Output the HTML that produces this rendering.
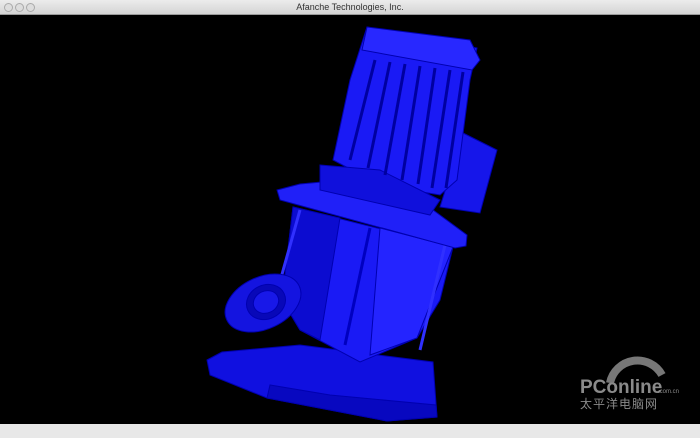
<!DOCTYPE html>
<html><head><style>
html,body{margin:0;padding:0;width:700px;height:438px;overflow:hidden;background:#000;font-family:"Liberation Sans",sans-serif}
.tb{position:absolute;left:0;top:0;width:700px;height:14px;background:linear-gradient(#ececec,#d4d4d4);border-bottom:1px solid #9a9a9a;text-align:center;font-size:9px;line-height:14px;color:#333}
.dot{position:absolute;top:3px;width:7px;height:7px;border-radius:50%;border:1px solid #aaa;background:#ddd}
.bb{position:absolute;left:0;top:424px;width:700px;height:14px;background:#e8e8e8}
</style></head><body>
<div class="tb">Afanche Technologies, Inc.<span class="dot" style="left:4px"></span><span class="dot" style="left:15px"></span><span class="dot" style="left:26px"></span></div>
<svg style="position:absolute;left:0;top:15px" width="700" height="409" viewBox="0 15 700 409">
<g stroke="#0000b0" stroke-width="1">
<polygon points="207,360 222,352 300,345 433,362 437,417 387,421 330,410 267,398 210,375" fill="#1010e0"/>
<polygon points="267,398 330,410 387,421 437,417 436,405 330,395 270,385" fill="#0808c0"/>
<polygon points="293,207 453,247 440,300 417,338 360,362 300,330 282,300" fill="#1a1af5"/>
<polygon points="293,207 340,218 320,340 300,330 282,300" fill="#0c0cd0"/>
<polygon points="380,228 453,247 417,338 370,355" fill="#2424ff"/>
<line x1="300" y1="210" x2="272" y2="310" stroke="#3030ff" stroke-width="3"/>
<line x1="445" y1="245" x2="420" y2="350" stroke="#3030ff" stroke-width="3"/>
<line x1="370" y1="228" x2="345" y2="345" stroke="#0000c0" stroke-width="3"/>
<ellipse cx="263" cy="303" rx="40" ry="26" transform="rotate(-25 263 303)" fill="#1414e0"/>
<ellipse cx="266" cy="302" rx="20" ry="17" transform="rotate(-25 266 302)" fill="#0808b8"/>
<ellipse cx="266" cy="302" rx="13" ry="11" transform="rotate(-25 266 302)" fill="#1818e8"/>
<polygon points="277,190 300,184 387,176 467,235 466,246 455,248 280,200" fill="#2020f8"/>
<polygon points="463,133 497,150 480,213 440,207" fill="#1616ea"/>
<polygon points="367,27 477,48 470,80 457,180 440,195 380,185 333,160 350,80" fill="#1a1af5"/>
<polygon points="367,27 470,40 480,60 472,70 362,50" fill="#2828ff"/>
<polygon points="320,165 380,170 440,200 430,215 320,190" fill="#1010dc"/>
</g>
<g stroke="#0000a0" stroke-width="3">
<line x1="375" y1="60" x2="350" y2="160"/><line x1="390" y1="62" x2="368" y2="168"/>
<line x1="405" y1="64" x2="385" y2="175"/><line x1="420" y1="66" x2="402" y2="180"/>
<line x1="435" y1="68" x2="418" y2="184"/><line x1="450" y1="70" x2="432" y2="188"/>
<line x1="463" y1="72" x2="446" y2="188"/>
</g>
<path d="M610,383 A28,28 0 0 1 662,375" stroke="#777" stroke-width="8" fill="none"/>
<g fill="#8a8a8a" font-family="Liberation Sans,sans-serif">
<text x="580" y="393" font-size="19" font-weight="bold">PConline</text>
<text x="658" y="393" font-size="6">.com.cn</text>
<text x="580" y="408" font-size="12" font-family="Noto Sans CJK SC,sans-serif" letter-spacing="1">太平洋电脑网</text>
</g>
</svg>
<div class="bb"></div>
</body></html>
